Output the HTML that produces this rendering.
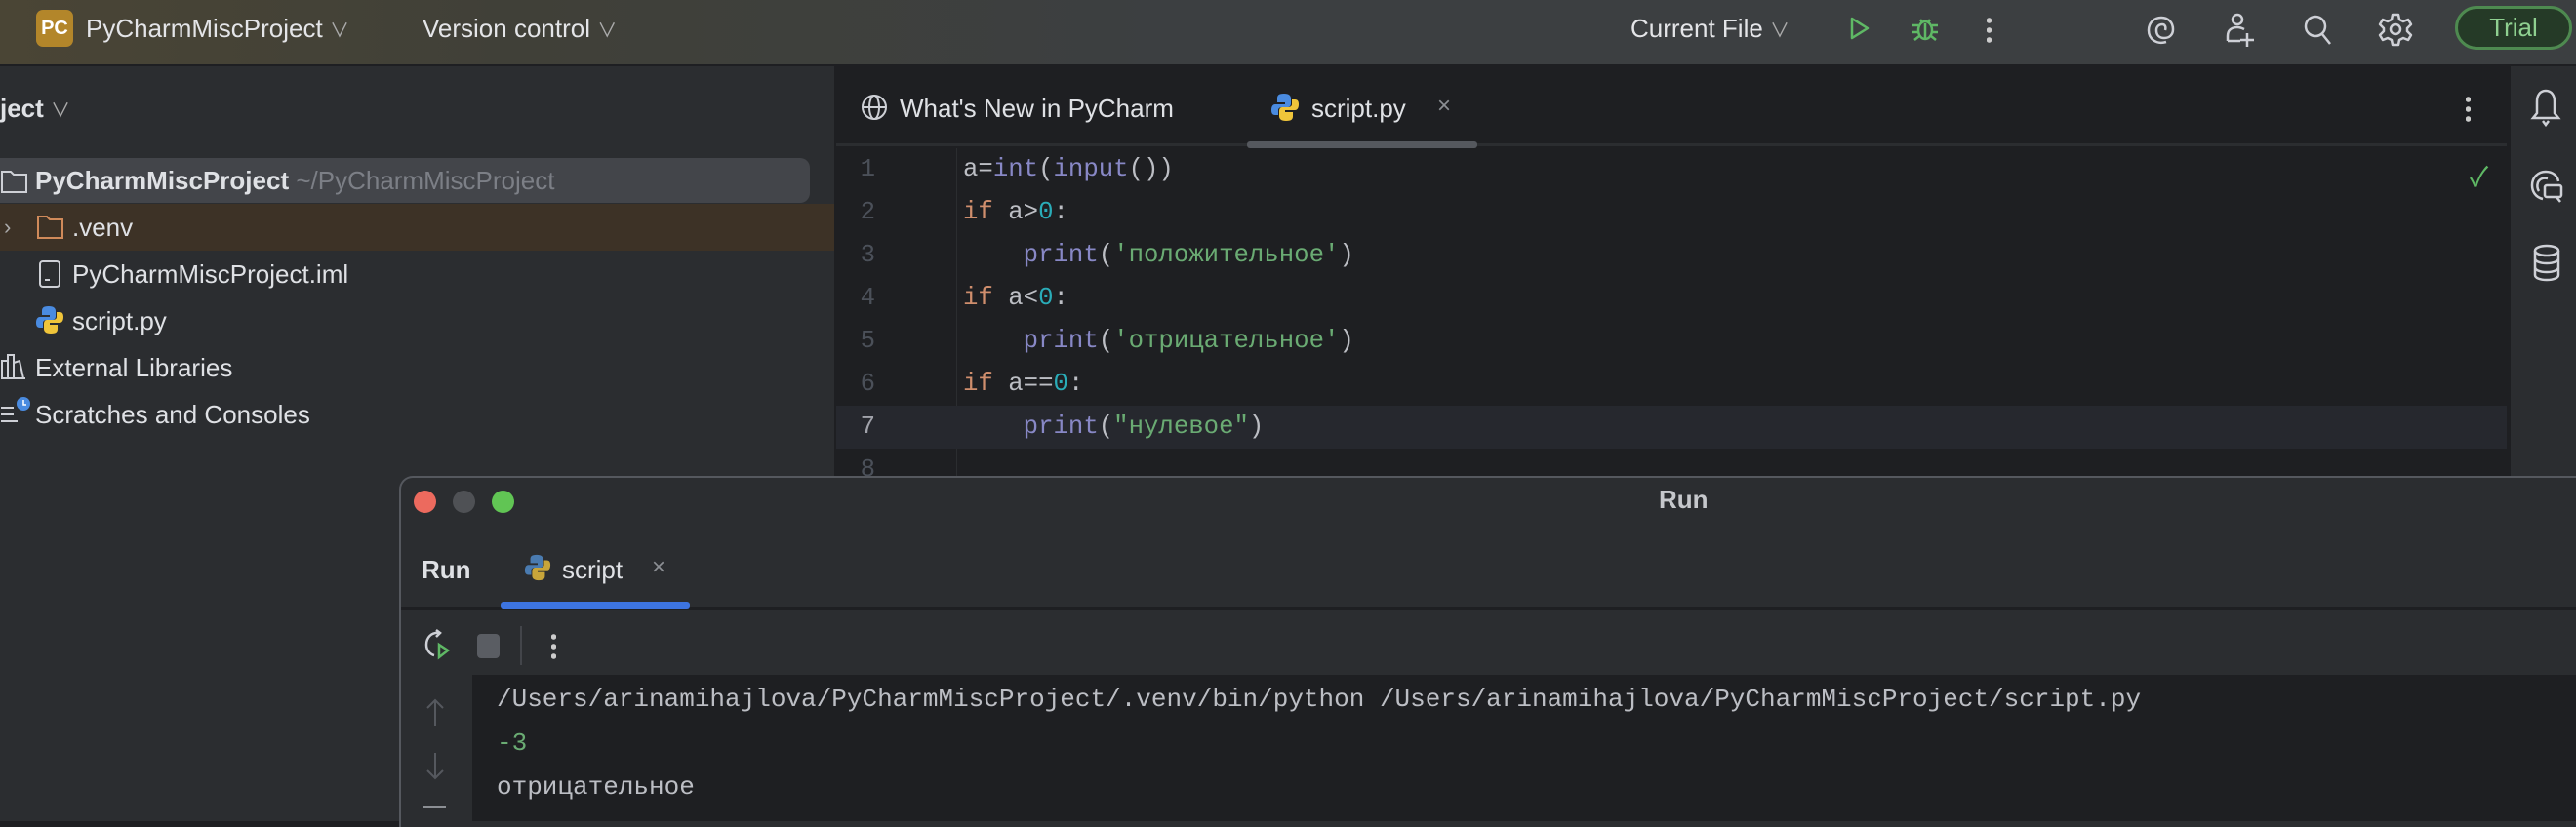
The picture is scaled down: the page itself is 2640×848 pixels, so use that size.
<!DOCTYPE html>
<html><head><meta charset="utf-8"><style>
*{margin:0;padding:0;box-sizing:border-box}
body{width:2640px;height:842px;overflow:hidden;background:#1e1f22;font-family:"Liberation Sans","Noto Sans CJK SC",sans-serif;color:#dfe1e5;position:relative}
.a{position:absolute;white-space:pre}
.top{left:0;top:0;width:2640px;height:68px;background:linear-gradient(90deg,#4a4535 0%,#404038 20%,#3c3f41 45%,#3c3f41 100%);border-bottom:2px solid #1e1f22}
.ui{font-size:26px;line-height:30px}
.mono{font-family:"Liberation Mono","Noto Sans CJK SC",monospace;font-size:25.7px;line-height:30px}
.left{left:0;top:68px;width:855px;height:774px;background:#2b2d30}
.right{left:2571px;top:68px;width:69px;height:774px;background:#2b2d30;border-left:2px solid #1e1f22}
.kw{color:#cf8e6d}.fn{color:#8888c6}.nu{color:#2aacb8}.st{color:#6aab73}.tx{color:#bcbec4}
.ln{color:#4b5059;width:40px;text-align:right}
</style></head><body>
<div class="a top"></div>
<div class="a" style="left:37px;top:10px;width:38px;height:38px;border-radius:7px;background:#b3862a;color:#fff;font-size:20px;font-weight:bold;line-height:38px;text-align:center">PC</div>
<div class="a ui" style="left:88px;top:14px;color:#e4e5e8">PyCharmMiscProject <span style="font-size:20px;color:#aaa">∨</span></div>
<div class="a ui" style="left:433px;top:14px;color:#e4e5e8">Version control <span style="font-size:20px;color:#aaa">∨</span></div>
<div class="a ui" style="left:1671px;top:14px;color:#e4e5e8">Current File <span style="font-size:20px;color:#aaa">∨</span></div>
<svg class="a" style="left:1890px;top:14px" width="30" height="30" viewBox="0 0 30 30"><path d="M8 5 L24 15 L8 25 Z" fill="none" stroke="#5fb865" stroke-width="2.5" stroke-linejoin="round"/></svg>
<svg class="a" style="left:1956px;top:12px" width="34" height="34" viewBox="0 0 34 34" fill="none" stroke="#5fb865" stroke-width="2.5"><ellipse cx="17" cy="19" rx="7" ry="9"/><path d="M12 8 L14 11 M22 8 L20 11 M4 14 H10 M24 14 H30 M4 21 H10 M24 21 H30 M6 29 L11 25 M28 29 L23 25 M17 12 V28"/></svg>
<div class="a" style="left:2036px;top:16px;width:5px;height:28px;background:radial-gradient(circle,#ccc 2.5px,transparent 3px) 0 0/5px 10px repeat-y"></div>
<svg class="a" style="left:2196px;top:12px" width="38" height="38" viewBox="0 0 38 38" fill="none" stroke="#ced0d6" stroke-width="2.5"><path d="M24 31 C14 34 6 28 6 19 C6 11 12 6 19 6 C26 6 31 11 31 18 C31 24 27 27 22 27 C17 27 14 24 14 19 C14 15 17 13 20 13 C23 13 24 16 23 19"/></svg>
<svg class="a" style="left:2276px;top:10px" width="40" height="40" viewBox="0 0 40 40" fill="none" stroke="#ced0d6" stroke-width="2.5"><circle cx="17" cy="10" r="5"/><path d="M7 32 V27 C7 21 11 18 17 18 C20 18 22 19 24 20 M7 32 H20 M27 24 V38 M20 31 H34"/></svg>
<svg class="a" style="left:2358px;top:12px" width="36" height="36" viewBox="0 0 36 36" fill="none" stroke="#ced0d6" stroke-width="2.5"><circle cx="15" cy="15" r="10"/><path d="M22 23 L30 33"/></svg>
<svg class="a" style="left:2436px;top:11px" width="38" height="38" viewBox="0 0 38 38" fill="none" stroke="#ced0d6" stroke-width="2.5"><circle cx="19" cy="19" r="5"/><path d="M16 4 H22 L23 9 L27 11 L32 9 L35 14 L31 18 V21 L35 25 L32 30 L27 28 L23 30 L22 35 H16 L15 30 L11 28 L6 30 L3 25 L7 21 V18 L3 14 L6 9 L11 11 L15 9 Z" stroke-linejoin="round"/></svg>
<div class="a" style="left:2516px;top:6px;width:120px;height:45px;border:3px solid #4e8a50;border-radius:23px;background:#253a27;color:#8fd090;font-size:26px;line-height:39px;text-align:center">Trial</div>

<div class="a left"></div>
<div class="a ui" style="left:0;top:96px;font-weight:bold;color:#dfe1e5">ject <span style="font-size:20px;font-weight:normal;color:#aaa">∨</span></div>
<div class="a" style="left:0;top:162px;width:830px;height:46px;background:#43454a;border-radius:0 10px 10px 0"></div>
<div class="a" style="left:0;top:209px;width:855px;height:48px;background:#3d3226"></div>
<svg class="a" style="left:0;top:172px" width="30" height="28" viewBox="0 0 30 28" fill="none" stroke="#ced0d6" stroke-width="2"><path d="M2 4 H11 L14 7 H27 V25 H2 Z"/></svg>
<div class="a ui" style="left:36px;top:170px;font-weight:bold">PyCharmMiscProject <span style="font-weight:normal;color:#7c7f86">~/PyCharmMiscProject</span></div>
<div class="a ui" style="left:4px;top:218px;color:#aaa;font-size:22px">›</div>
<svg class="a" style="left:37px;top:219px" width="30" height="28" viewBox="0 0 30 28" fill="none" stroke="#d08a5a" stroke-width="2"><path d="M2 3 H11 L14 6 H27 V25 H2 Z"/></svg>
<div class="a ui" style="left:74px;top:218px">.venv</div>
<svg class="a" style="left:38px;top:266px" width="26" height="30" viewBox="0 0 26 30" fill="none" stroke="#ced0d6" stroke-width="2"><rect x="3" y="2" width="20" height="26" rx="3"/><path d="M8 21 H13"/></svg>
<div class="a ui" style="left:74px;top:266px">PyCharmMiscProject.iml</div>
<svg class="a" style="left:36px;top:312px" width="30" height="32" viewBox="0 0 30 32"><path d="M14 2 C8 2 7 4 7 7 V11 H15 V13 H5 C2 13 1 16 1 19 C1 22 2 24 5 24 H8 V19 C8 17 10 16 12 16 H18 C20 16 21 14 21 12 V7 C21 4 19 2 14 2Z" fill="#4a8be0"/><path d="M16 30 C22 30 23 28 23 25 V21 H15 V19 H25 C28 19 29 16 29 13 C29 10 28 8 25 8 H22 V13 C22 15 20 16 18 16 H12 C10 16 9 18 9 20 V25 C9 28 11 30 16 30Z" fill="#f0c53a"/></svg>
<div class="a ui" style="left:74px;top:314px">script.py</div>
<svg class="a" style="left:0;top:360px" width="32" height="30" viewBox="0 0 32 30" fill="none" stroke="#ced0d6" stroke-width="2"><path d="M2 28 V10 H8 V28 M8 28 V4 H14 V28 M14 28 V12 L20 10 L24 28 M1 28 H26"/></svg>
<div class="a ui" style="left:36px;top:362px">External Libraries</div>
<svg class="a" style="left:0;top:406px" width="34" height="32" viewBox="0 0 34 32"><path d="M1 12 H14 M1 19 H14 M1 26 H18" stroke="#ced0d6" stroke-width="2"/><circle cx="24" cy="8" r="7" fill="#4a8be0"/><path d="M24 4 V9 H27" stroke="#fff" stroke-width="1.5" fill="none"/></svg>
<div class="a ui" style="left:36px;top:410px">Scratches and Consoles</div>

<!-- editor -->
<div class="a" style="left:857px;top:68px;width:1712px;height:82px;background:#1e1f22;border-bottom:3px solid #2b2d30"></div>
<svg class="a" style="left:882px;top:96px" width="28" height="28" viewBox="0 0 28 28" fill="none" stroke="#ced0d6" stroke-width="2"><circle cx="14" cy="14" r="12"/><ellipse cx="14" cy="14" rx="5" ry="12"/><path d="M2 14 H26"/></svg>
<div class="a ui" style="left:922px;top:96px;color:#dfe1e5">What's New in PyCharm</div>
<svg class="a" style="left:1302px;top:94px" width="30" height="32" viewBox="0 0 30 32"><path d="M14 2 C8 2 7 4 7 7 V11 H15 V13 H5 C2 13 1 16 1 19 C1 22 2 24 5 24 H8 V19 C8 17 10 16 12 16 H18 C20 16 21 14 21 12 V7 C21 4 19 2 14 2Z" fill="#4a8be0"/><path d="M16 30 C22 30 23 28 23 25 V21 H15 V19 H25 C28 19 29 16 29 13 C29 10 28 8 25 8 H22 V13 C22 15 20 16 18 16 H12 C10 16 9 18 9 20 V25 C9 28 11 30 16 30Z" fill="#f0c53a"/></svg>
<div class="a ui" style="left:1344px;top:96px">script.py</div>
<div class="a ui" style="left:1473px;top:94px;color:#8c8f94;font-size:24px">×</div>
<div class="a" style="left:1278px;top:145px;width:236px;height:7px;background:#55585e;border-radius:3px"></div>
<div class="a" style="left:2527px;top:97px;width:5px;height:28px;background:radial-gradient(circle,#ccc 2.5px,transparent 3px) 0 0/5px 10px repeat-y"></div>
<div class="a" style="left:980px;top:152px;width:1px;height:340px;background:#2b2d30"></div>
<div class="a" style="left:857px;top:416px;width:1712px;height:44px;background:#26282e"></div>
<div class="a" style="left:2531px;top:160px;color:#5fb865;font-size:28px">✓</div>
<div class="a mono ln" style="left:857px;top:159px">1</div>
<div class="a mono ln" style="left:857px;top:203px">2</div>
<div class="a mono ln" style="left:857px;top:247px">3</div>
<div class="a mono ln" style="left:857px;top:291px">4</div>
<div class="a mono ln" style="left:857px;top:335px">5</div>
<div class="a mono ln" style="left:857px;top:379px">6</div>
<div class="a mono ln" style="left:857px;top:423px;color:#a1a3ab">7</div>
<div class="a mono ln" style="left:857px;top:467px">8</div>
<div class="a mono tx" style="left:987px;top:159px">a=<span class="fn">int</span>(<span class="fn">input</span>())</div>
<div class="a mono tx" style="left:987px;top:203px"><span class="kw">if</span> a&gt;<span class="nu">0</span>:</div>
<div class="a mono tx" style="left:987px;top:247px">    <span class="fn">print</span>(<span class="st">'положительное'</span>)</div>
<div class="a mono tx" style="left:987px;top:291px"><span class="kw">if</span> a&lt;<span class="nu">0</span>:</div>
<div class="a mono tx" style="left:987px;top:335px">    <span class="fn">print</span>(<span class="st">'отрицательное'</span>)</div>
<div class="a mono tx" style="left:987px;top:379px"><span class="kw">if</span> a==<span class="nu">0</span>:</div>
<div class="a mono tx" style="left:987px;top:423px">    <span class="fn">print</span>(<span class="st">"нулевое"</span>)</div>

<div class="a right"></div>
<svg class="a" style="left:2592px;top:90px" width="34" height="40" viewBox="0 0 34 40" fill="none" stroke="#ced0d6" stroke-width="2.5"><path d="M17 3 C11 3 8 8 8 14 V26 L4 31 H30 L26 26 V14 C26 8 23 3 17 3Z M14 34 L17 38 L20 34"/></svg>
<svg class="a" style="left:2592px;top:170px" width="36" height="40" viewBox="0 0 36 40" fill="none" stroke="#ced0d6" stroke-width="2.5"><path d="M14 34 C6 32 3 26 3 20 C3 12 9 6 17 6 C24 6 29 10 30 16 M10 26 C8 23 8 20 9 17 C11 13 15 12 19 13"/><rect x="16" y="20" width="17" height="12" rx="2"/><path d="M28 32 L32 37"/></svg>
<svg class="a" style="left:2594px;top:250px" width="32" height="40" viewBox="0 0 32 40" fill="none" stroke="#ced0d6" stroke-width="2.5"><ellipse cx="16" cy="7" rx="12" ry="5"/><path d="M4 7 V32 C4 35 9 37 16 37 C23 37 28 35 28 32 V7 M4 15 C4 18 9 20 16 20 C23 20 28 18 28 15 M4 24 C4 27 9 29 16 29 C23 29 28 27 28 24"/></svg>

<!-- Run window -->
<div class="a" style="left:409px;top:488px;width:2240px;height:360px;background:#2b2d30;border:2px solid #55585e;border-right:none;border-bottom:none;border-radius:14px 0 0 0"></div>
<div class="a" style="left:424px;top:503px;width:23px;height:23px;border-radius:50%;background:#ec6a5e"></div>
<div class="a" style="left:464px;top:503px;width:23px;height:23px;border-radius:50%;background:#4f5155"></div>
<div class="a" style="left:504px;top:503px;width:23px;height:23px;border-radius:50%;background:#61c554"></div>
<div class="a ui" style="left:1700px;top:497px;font-weight:bold;color:#c6c8cc">Run</div>
<div class="a ui" style="left:432px;top:569px;font-weight:bold">Run</div>
<svg class="a" style="left:537px;top:567px" width="28" height="30" viewBox="0 0 30 32"><path d="M14 2 C8 2 7 4 7 7 V11 H15 V13 H5 C2 13 1 16 1 19 C1 22 2 24 5 24 H8 V19 C8 17 10 16 12 16 H18 C20 16 21 14 21 12 V7 C21 4 19 2 14 2Z" fill="#4a7bb0"/><path d="M16 30 C22 30 23 28 23 25 V21 H15 V19 H25 C28 19 29 16 29 13 C29 10 28 8 25 8 H22 V13 C22 15 20 16 18 16 H12 C10 16 9 18 9 20 V25 C9 28 11 30 16 30Z" fill="#c8a53a"/></svg>
<div class="a ui" style="left:576px;top:569px">script</div>
<div class="a ui" style="left:668px;top:567px;color:#8c8f94;font-size:24px">×</div>
<div class="a" style="left:411px;top:622px;width:2229px;height:3px;background:#1e1f22"></div>
<div class="a" style="left:513px;top:617px;width:194px;height:7px;background:#3d74e0;border-radius:3px"></div>
<svg class="a" style="left:432px;top:644px" width="34" height="36" viewBox="0 0 34 36" fill="none" stroke-width="2.5"><path d="M18 5 C10 4 5 10 5 17 C5 23 9 27 13 28" stroke="#ced0d6"/><path d="M15 2 L19 5 L15 9" stroke="#ced0d6"/><path d="M18 17 L27 23 L18 30 Z" stroke="#5fb865"/></svg>
<div class="a" style="left:489px;top:650px;width:23px;height:25px;border-radius:4px;background:#5a5d63"></div>
<div class="a" style="left:533px;top:642px;width:2px;height:40px;background:#43454a"></div>
<div class="a" style="left:565px;top:648px;width:5px;height:28px;background:radial-gradient(circle,#ccc 2.5px,transparent 3px) 0 0/5px 10px repeat-y"></div>
<div class="a" style="left:411px;top:692px;width:2229px;height:150px;background:#1e1f22"></div>
<div class="a" style="left:411px;top:692px;width:73px;height:150px;background:#2b2d30"></div>
<svg class="a" style="left:434px;top:716px" width="24" height="30" viewBox="0 0 24 30" fill="none" stroke="#55585e" stroke-width="2"><path d="M12 2 V28 M4 10 L12 2 L20 10"/></svg>
<svg class="a" style="left:434px;top:770px" width="24" height="30" viewBox="0 0 24 30" fill="none" stroke="#55585e" stroke-width="2"><path d="M12 2 V28 M4 20 L12 28 L20 20"/></svg>
<div class="a" style="left:433px;top:826px;width:24px;height:3px;background:#8c8f94"></div>
<div class="a mono" style="left:509px;top:702px;font-size:26px;color:#bcbec4">/Users/arinamihajlova/PyCharmMiscProject/.venv/bin/python /Users/arinamihajlova/PyCharmMiscProject/script.py</div>
<div class="a mono" style="left:509px;top:747px;font-size:26px;color:#6aab73">-3</div>
<div class="a mono" style="left:509px;top:792px;font-size:26px;color:#bcbec4">отрицательное</div>
</body></html>
